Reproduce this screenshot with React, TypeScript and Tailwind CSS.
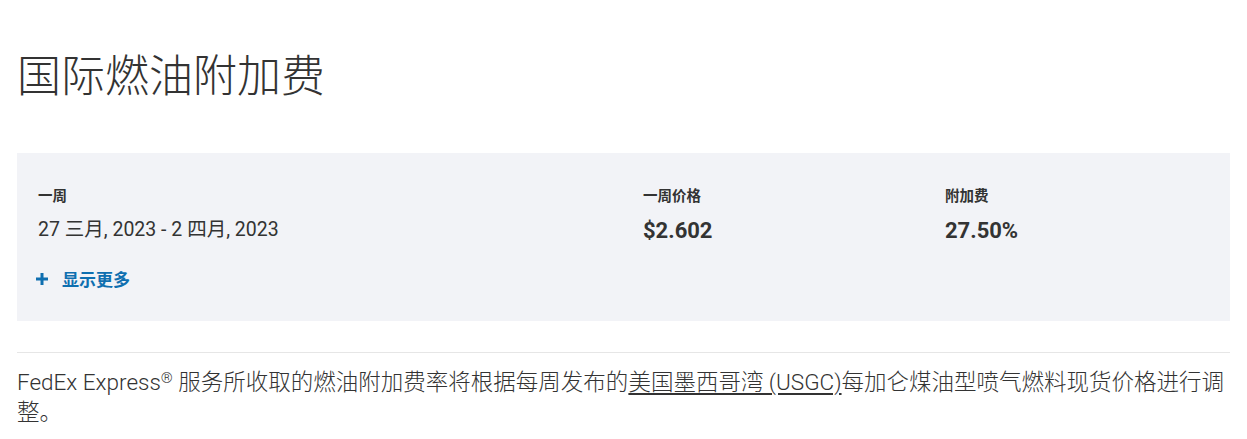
import React from 'react';

const FONT = 'font-[Roboto,"Noto_Sans_CJK_SC",sans-serif]';

const Stat: React.FC<{ label: string; value: string; bold?: boolean; className?: string }> = ({ label, value, bold, className }) => (
  <div className={className}>
    <div className="text-[14.5px] leading-[18px] font-bold text-[#333]">{label}</div>
    <div className={`mt-[11px] text-[#333] ${bold ? 'text-[22px] font-bold leading-[28px]' : 'text-[19.5px] font-normal leading-[26px]'}`}>
      {value}
    </div>
  </div>
);

const App: React.FC = () => {
  return (
    <div className={`min-h-screen bg-white px-[17px] pt-[47px] ${FONT} text-[#333]`}>
      <h1 className="text-[44px] font-light leading-[60px] text-[#333]">国际燃油附加费</h1>

      <section className="mt-[46px] h-[168px] bg-[#f2f3f7] px-[21px] pt-[35px]">
        <div className="flex">
          <Stat className="w-[605px]" label="一周" value="27 三月, 2023 - 2 四月, 2023" />
          <Stat className="w-[302px]" label="一周价格" value="$2.602" bold />
          <Stat label="附加费" value="27.50%" bold />
        </div>
        <button className="-ml-[2px] mt-[23px] flex items-center gap-[14px] text-[17px] font-bold text-[#0f6fb0]">
          <svg width="12" height="12" viewBox="0 0 12 12" className="-mt-[4px]">
            <path d="M6 0v12M0 6h12" stroke="currentColor" strokeWidth="3" />
          </svg>
          显示更多
        </button>
      </section>

      <div className="mt-[31px] border-t border-[#e6e6e6] pt-[14px]">
        <p className="text-[22.5px] font-light leading-[30px] text-[#333]">
          FedEx Express<sup className="text-[15px] leading-none">®</sup> 服务所收取的燃油附加费率将根据每周发布的
          <a className="text-[#333] underline decoration-[1.5px] underline-offset-[3px]">美国墨西哥湾 (USGC)</a>
          每加仑煤油型喷气燃料现货价格进行调整。
        </p>
      </div>
    </div>
  );
};

export default App;
